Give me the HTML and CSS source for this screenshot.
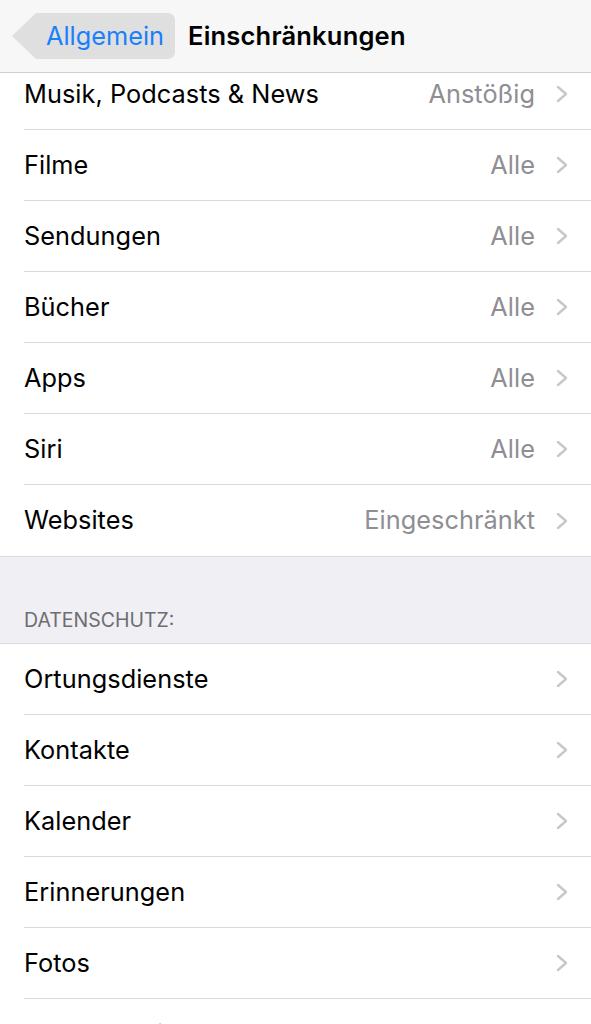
FILE: index.html
```html
<!DOCTYPE html>
<html lang="de">
<head>
<meta charset="utf-8">
<link rel="stylesheet" href="styles.css">
</head>
<body>
<header class="nav">
  <div class="back"><span class="back-label">Allgemein</span></div>
  <div class="title">Einschränkungen</div>
</header>
<main class="content">
  <ul class="group">
    <li class="row"><span class="label">Musik, Podcasts &amp; News</span><span class="value">Anstößig</span><svg class="chev" viewBox="0 0 12 18"><polyline points="2,2 10,9 2,16"/></svg></li>
    <li class="row"><span class="label">Filme</span><span class="value">Alle</span><svg class="chev" viewBox="0 0 12 18"><polyline points="2,2 10,9 2,16"/></svg></li>
    <li class="row"><span class="label">Sendungen</span><span class="value">Alle</span><svg class="chev" viewBox="0 0 12 18"><polyline points="2,2 10,9 2,16"/></svg></li>
    <li class="row"><span class="label">Bücher</span><span class="value">Alle</span><svg class="chev" viewBox="0 0 12 18"><polyline points="2,2 10,9 2,16"/></svg></li>
    <li class="row"><span class="label">Apps</span><span class="value">Alle</span><svg class="chev" viewBox="0 0 12 18"><polyline points="2,2 10,9 2,16"/></svg></li>
    <li class="row"><span class="label">Siri</span><span class="value">Alle</span><svg class="chev" viewBox="0 0 12 18"><polyline points="2,2 10,9 2,16"/></svg></li>
    <li class="row"><span class="label">Websites</span><span class="value">Eingeschränkt</span><svg class="chev" viewBox="0 0 12 18"><polyline points="2,2 10,9 2,16"/></svg></li>
  </ul>
  <div class="section-header">DATENSCHUTZ:</div>
  <ul class="group">
    <li class="row"><span class="label">Ortungsdienste</span><svg class="chev" viewBox="0 0 12 18"><polyline points="2,2 10,9 2,16"/></svg></li>
    <li class="row"><span class="label">Kontakte</span><svg class="chev" viewBox="0 0 12 18"><polyline points="2,2 10,9 2,16"/></svg></li>
    <li class="row"><span class="label">Kalender</span><svg class="chev" viewBox="0 0 12 18"><polyline points="2,2 10,9 2,16"/></svg></li>
    <li class="row"><span class="label">Erinnerungen</span><svg class="chev" viewBox="0 0 12 18"><polyline points="2,2 10,9 2,16"/></svg></li>
    <li class="row"><span class="label">Fotos</span><svg class="chev" viewBox="0 0 12 18"><polyline points="2,2 10,9 2,16"/></svg></li>
    <li class="row"><span class="label">Standort teilen</span><svg class="chev" viewBox="0 0 12 18"><polyline points="2,2 10,9 2,16"/></svg></li>
  </ul>
</main>
</body>
</html>
```
FILE: styles.css
```css
* { box-sizing: border-box; }
html, body { margin: 0; padding: 0; }
body {
  background: #efeff4;
  font-family: Inter, "Liberation Sans", sans-serif;
  color: #000;
  width: 591px;
  height: 1024px;
  overflow: hidden;
}
.nav {
  position: fixed;
  top: 0; left: 0; right: 0;
  height: 73px;
  background: #f7f7f7;
  border-bottom: 1px solid #cfcfd2;
  display: flex;
  align-items: center;
  padding-left: 36px;
  z-index: 2;
}
.back {
  position: relative;
  height: 46px;
  width: 139px;
  background: #dfdfdf;
  border-radius: 0 7px 7px 0;
  display: flex;
  align-items: center;
  padding-left: 10px;
  margin-top: -1px;
}
.back::before {
  content: "";
  position: absolute;
  left: -24px;
  top: 0;
  border-style: solid;
  border-width: 23px 24px 23px 0;
  border-color: transparent #dfdfdf transparent transparent;
}
.back-label {
  color: #1a7ffb;
  font-size: 25.3px;
}
.title {
  margin-left: 13px;
  font-size: 25.5px;
  font-weight: 600;
  letter-spacing: 0.2px;
  margin-top: -1px;
}
.content {
  padding-top: 58px;
}
.group {
  list-style: none;
  margin: 0;
  padding: 0 0 0 24px;
  background: #fff;
  border-top: 1px solid #d9d9dc;
  border-bottom: 1px solid #d9d9dc;
}
.row {
  height: 71px;
  display: flex;
  align-items: center;
  padding-right: 23px;
  padding-bottom: 2px;
  border-bottom: 1px solid #dadadd;
  font-size: 25.3px;
  letter-spacing: 0.05px;
}
.row:last-child { border-bottom: none; }
.label { flex: 1; }
.value {
  color: #8e8e93;
  margin-right: 21px;
}
.chev {
  width: 12px;
  height: 18px;
  margin-top: 2px;
  fill: none;
  stroke: #c7c7cc;
  stroke-width: 2.4;
  stroke-linecap: round;
  stroke-linejoin: round;
}
.section-header {
  height: 86px;
  padding: 51px 0 0 24px;
  font-size: 19.5px;
  color: #6d6d72;
  background: #efeff4;
}
```
